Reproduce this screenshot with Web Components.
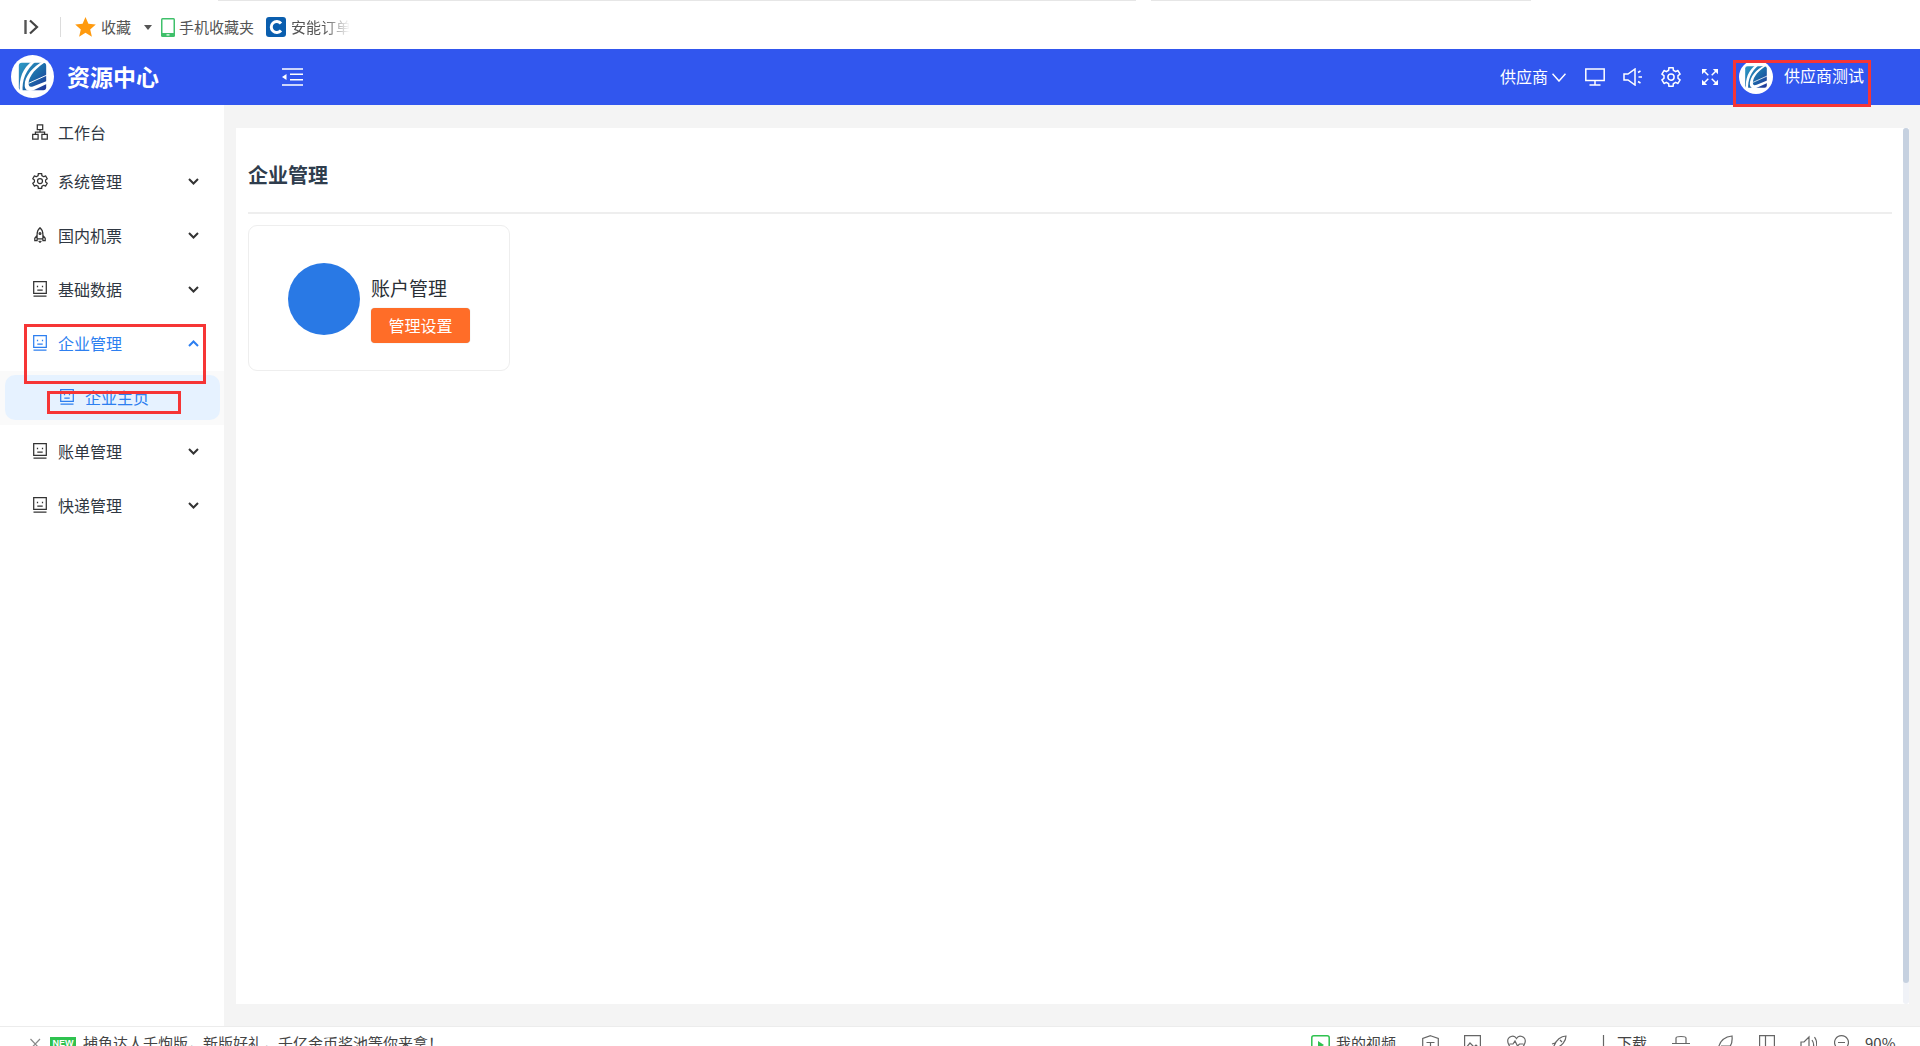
<!DOCTYPE html>
<html lang="zh-CN">
<head>
<meta charset="utf-8">
<title>资源中心</title>
<style>
html,body{margin:0;height:100%;overflow:hidden;background:#fff}
body{font-family:"Noto Sans CJK SC","Liberation Sans",sans-serif;display:flex;flex-direction:column;height:1046px;position:relative}
</style>
</head>
<body>
<browser-bar></browser-bar>
<app-header></app-header>
<app-shell>
  <side-menu slot="side">
    <menu-item icon="org" label="工作台" plain></menu-item>
    <menu-item icon="gear" label="系统管理"></menu-item>
    <menu-item icon="rocket" label="国内机票"></menu-item>
    <menu-item icon="face" label="基础数据"></menu-item>
    <menu-item icon="face" label="企业管理" open></menu-item>
    <sub-item icon="face" label="企业主页"></sub-item>
    <menu-item icon="face" label="账单管理"></menu-item>
    <menu-item icon="face" label="快递管理"></menu-item>
  </side-menu>
  <content-panel heading="企业管理">
    <account-card title-text="账户管理" action="管理设置"></account-card>
  </content-panel>
</app-shell>
<status-bar></status-bar>
<red-mark style="left:24px;top:324px;width:182px;height:60px"></red-mark>
<red-mark style="left:47px;top:391px;width:134px;height:23px"></red-mark>
<red-mark style="left:1733px;top:60px;width:138px;height:47px"></red-mark>
<script>
const FONT='"Noto Sans CJK SC","Liberation Sans",sans-serif';
/* six-lobed gear outline, centred on (8,8) */
function gearPath(R,r){
  let d='';
  for(let i=0;i<6;i++){
    const a=-90+i*60;
    const pts=[[r,a-19],[R,a-13],[R,a+13],[r,a+19]];
    pts.forEach(([q,t],k)=>{
      const x=(8+q*Math.cos(t*Math.PI/180)).toFixed(2),y=(8+q*Math.sin(t*Math.PI/180)).toFixed(2);
      d+=(i===0&&k===0?'M':'L')+x+' '+y;
    });
  }
  return d+'z';
}
const ICONS={
 org:'<path d="M5.300.8h5.400v4.900H5.300zM.7 10.300h5.400v4.900H.7zM9.900 10.300h5.400v4.900H9.900zM8 5.700V8M3.400 10.300V8h9.200v2.300"/>',
 gear:`<path stroke-linejoin="round" d="${gearPath(7.6,5.7)}"/><circle cx="8" cy="8" r="2.500"/>`,
 rocket:'<path d="M8 .8c2 1.700 2.900 4 2.900 6.500v4.500H5.100V7.300C5.100 4.800 6 2.500 8 .8zM5.100 8.300 2.800 11.300v2.200h2.300v-1.700M10.900 8.300l2.300 3v2.200h-2.300v-1.700M6.700 13.800 8 15.300l1.300-1.500"/><circle cx="8" cy="6.500" r=".9"/>',
 face:'<path d="M1.700.7h12.600v11.600H1.700zM1.500 15h13"/><path d="M5.500 4.700v1.500M10.500 4.700v1.500M5.300 9h5.400"/>'
};
function def(name,html,init){
  customElements.define(name,class extends HTMLElement{
    constructor(){super();this.attachShadow({mode:'open'});}
    connectedCallback(){
      this.shadowRoot.innerHTML=typeof html==='function'?html(this):html;
      if(init)init(this);
    }
  });
}
const LOGO=(s)=>`<svg width="${s}" height="${s}" viewBox="0 0 44 44" style="display:block;flex:none">
<defs><linearGradient id="lg" x1="0" y1="0" x2="1" y2="1"><stop offset="0" stop-color="#2f9bc6"/><stop offset=".55" stop-color="#1c6aa8"/><stop offset="1" stop-color="#20329a"/></linearGradient></defs>
<circle cx="22" cy="22" r="22" fill="#fff"/>
<path d="M11 8h22q3 0 3 3v22q0 3-3 3H11q-3 0-3-3V11q0-3 3-3z" fill="url(#lg)"/>
<path d="M22 6C12 14 8 23 9 38h3C11 26 15 15 26 6z" fill="#fff"/>
<path d="M34 6C22 12 14 22 14 31c0 5 4 7 9 5l15-7v-3l-15 6c-4 1.500-5 0-5-3 0-7 8-17 20-23z" fill="#fff"/>
<path d="M38 20 18 29" stroke="#fff" stroke-width="1"/>
</svg>`;

def('browser-bar',`<style>
:host{display:flex;align-items:center;height:49px;flex:none;box-sizing:border-box;background:#fff;position:relative;padding:5px 0 0 24px;font:15px/20px ${FONT};color:#555;overflow:hidden}
.tab{position:absolute;top:0;height:1px;background:#e6e6e6}
.sep{width:1px;height:20px;background:#dcdcdc;margin:0 14px 0 21px}
svg{display:block;flex:none}
.fade{width:59px;white-space:nowrap;overflow:hidden;-webkit-mask-image:linear-gradient(90deg,#000 55%,transparent);mask-image:linear-gradient(90deg,#000 55%,transparent)}
</style>
<span class="tab" style="left:218px;width:918px"></span><span class="tab" style="left:1151px;width:380px"></span>
<svg width="15" height="16" viewBox="0 0 15 16"><path d="M1.500 1v14" stroke="#555" stroke-width="2.400"/><path d="M6 1.500 13 8l-7 6.500" fill="none" stroke="#444" stroke-width="2.200"/></svg>
<span class="sep"></span>
<svg width="21" height="20" viewBox="0 0 21 20"><path d="M10.500 0 13.400 6.800 20.800 7.500 15.200 12.400 16.900 19.700 10.500 15.800 4.100 19.700 5.800 12.400.2 7.500 7.600 6.800z" fill="#ff9a0e"/></svg>
<span style="margin-left:5px">收藏</span>
<svg style="margin-left:13px" width="8" height="5" viewBox="0 0 8 5"><path d="M0 0h8L4 5z" fill="#555"/></svg>
<svg style="margin-left:9px" width="14" height="19" viewBox="0 0 14 19"><rect width="14" height="19" rx="1.500" fill="#3fc06a"/><rect x="1.500" y="1.500" width="11" height="13.500" fill="#fff"/><rect x="5.500" y="16.300" width="3" height="1.200" fill="#fff"/></svg>
<span style="margin-left:4px">手机收藏夹</span>
<svg style="margin-left:12px" width="20" height="20" viewBox="0 0 20 20"><rect width="20" height="20" rx="3" fill="#0a5eae"/><path d="M15 6.500A5.500 5.500 0 1 0 15 13.500" fill="none" stroke="#fff" stroke-width="3"/></svg>
<span class="fade" style="margin-left:5px">安能订单</span>`);

const corner=(t)=>`<g transform="${t}"><path d="M0 0h5.200L0 5.200z" fill="#fff"/><path d="M2 2l4.300 4.300" stroke="#fff" stroke-width="1.500"/></g>`;
def('app-header',()=>`<style>
:host{display:flex;align-items:center;height:56px;flex:none;background:#3156ee;color:#fff;font:16px/24px ${FONT}}
.brand{display:flex;align-items:center;width:282px;padding:0 0 2px 11px;box-sizing:border-box;flex:none;gap:13px}
.brand b{font-size:23px;font-weight:700}
.right{margin-left:auto;display:flex;align-items:center;padding-right:56px}
.sup{position:relative;top:-1px}
svg{display:block;flex:none}
.st{fill:none;stroke:#fff;stroke-width:1.500}
.user{margin-left:11px;position:relative;top:-2px}
</style>
<div class="brand">${LOGO(43)}<b>资源中心</b></div>
<svg width="21" height="18" viewBox="0 0 21 18"><path d="M0 1h21M8 6.300h13M8 11.700h13M0 17h21" stroke="#fff" stroke-width="1.600"/><path d="M0 9l4.500-3v6z" fill="#fff"/></svg>
<div class="right">
 <span class="sup">供应商</span>
 <svg style="margin-left:4px" width="14" height="9" viewBox="0 0 14 9"><path class="st" d="M.5.700 7 8 13.500.700"/></svg>
 <svg style="margin-left:19px" width="20" height="18" viewBox="0 0 20 18"><path class="st" d="M.8 1h18.400v11.500H.8zM10 12.500V17M4.500 17h11"/></svg>
 <svg style="margin-left:18px" width="20" height="18" viewBox="0 0 20 18"><path class="st" d="M1 6h4l7-5v16l-7-5H1z"/><path class="st" d="M15 4.500l2.500-1.500M15.500 9H19M15 13.500l2.500 1.500"/></svg>
 <svg style="margin-left:18px" width="20" height="20" viewBox="0 0 16 16"><g fill="none" stroke="#fff" stroke-width="1.200">${ICONS.gear}</g></svg>
 <svg style="margin-left:21px" width="16" height="16" viewBox="0 0 16 16">${corner('')}${corner('translate(16 0) scale(-1 1)')}${corner('translate(0 16) scale(1 -1)')}${corner('translate(16 16) scale(-1 -1)')}</svg>
 <span style="margin-left:21px">${LOGO(34)}</span>
 <span class="user">供应商测试</span>
</div>`);

def('app-shell',`<style>
:host{display:flex;flex:1;min-height:0;background:#f4f4f4}
::slotted([slot=side]){flex:none}
.main{flex:1;min-width:0;padding:23px 11px 22px 12px;display:flex}
</style>
<slot name="side"></slot><div class="main"><slot></slot></div>`);

def('side-menu',`<style>
:host{display:block;width:224px;background:#fff;box-sizing:border-box}
</style><slot></slot>`);

const chev=(c,up)=>`<svg width="11" height="7" viewBox="0 0 11 7" style="margin-left:auto;display:block;flex:none"><path d="${up?'M1 6 5.500 1.500 10 6':'M1 1 5.500 5.500 10 1'}" fill="none" stroke="${c}" stroke-width="2"/></svg>`;
const ic=(n,c)=>`<svg width="16" height="16" viewBox="0 0 16 16" style="display:block;flex:none"><g fill="none" stroke="${c}" stroke-width="1.250">${ICONS[n]}</g></svg>`;

def('menu-item',(e)=>{
 const open=e.hasAttribute('open'),plain=e.hasAttribute('plain');
 const c=open?'#2d7ff0':'#2f3742';
 return `<style>
 :host{display:flex;align-items:center;box-sizing:border-box;height:${plain?50:54}px;padding:${plain?'4px':'0'} 25px ${plain?'0':'2px'} 32px;color:${c};font:16px/22px ${FONT}}
 .t{margin-left:10px;white-space:nowrap}
 </style>${ic(e.getAttribute('icon'),open?'#2d7ff0':'#333')}<span class="t">${e.getAttribute('label')}</span>${plain?'':chev(open?'#2d7ff0':'#333',open)}`;
});

def('sub-item',(e)=>`<style>
:host{display:block;height:54px;background:#fafafa;box-sizing:border-box;padding:4px 4px 5px 5px}
.pill{display:flex;align-items:center;box-sizing:border-box;height:100%;background:#e6f2ff;border-radius:10px;padding:0 0 1px 54px;color:#2d7ff0;font:16px/22px ${FONT}}
.t{margin-left:10px}
</style><div class="pill">${ic(e.getAttribute('icon'),'#2d7ff0')}<span class="t">${e.getAttribute('label')}</span></div>`);

def('content-panel',(e)=>`<style>
:host{display:block;flex:1;background:#fff;position:relative;box-sizing:border-box;padding:0 17px 0 12px;min-width:0}
h2{margin:0;height:86px;box-sizing:border-box;padding-top:33px;font:700 20px/28px ${FONT};color:#2f3d4d;border-bottom:2px solid #eee;margin-bottom:11px}
.track{position:absolute;right:0;top:0;bottom:0;width:6px;background:#f0f2f7;border-radius:3px}
.thumb{position:absolute;left:0;right:0;top:0;bottom:21px;background:#c6d1e0;border-radius:3px}
</style><h2>${e.getAttribute('heading')}</h2><slot></slot><div class="track"><div class="thumb"></div></div>`);

def('account-card',(e)=>`<style>
:host{display:flex;align-items:center;box-sizing:border-box;width:262px;height:146px;border:1px solid #eee;border-radius:9px;padding:0 0 0 39px;background:#fff}
.dot{width:72px;height:72px;border-radius:50%;background:#2979e5;flex:none;margin-top:2px}
.col{margin-left:11px;padding-top:21px}
.tt{font:19px/25px ${FONT};color:#2a2f36;margin-bottom:8px}
.btn{width:99px;height:35px;border-radius:4px;background:#ff6d28;color:#fff;font:16px/35px ${FONT};text-align:center;box-shadow:0 0 1px rgba(0,0,0,.3)}
</style><div class="dot"></div><div class="col"><div class="tt">${e.getAttribute('title-text')}</div><div class="btn">${e.getAttribute('action')}</div></div>`);

const g=(w,ml,d)=>`<svg width="${w}" height="20" viewBox="0 0 ${w} 20" style="display:block;flex:none;margin:3px 0 0 ${ml}px"><path d="${d}" fill="none" stroke="#666" stroke-width="1.200"/></svg>`;
def('status-bar',`<style>
:host{display:flex;align-items:flex-start;height:20px;flex:none;box-sizing:border-box;border-top:1px solid #ececec;background:#fff;padding:5px 0 0 30px;overflow:hidden;font:15px/22px ${FONT};color:#444;white-space:nowrap}
.new{width:26px;height:18px;background:#2fc24f;color:#fff;font:700 9px/13px "Liberation Sans",sans-serif;text-align:center;margin:5px 7px 0 9px;flex:none}
.r{margin-left:auto;display:flex;align-items:flex-start;width:609px;box-sizing:border-box}
</style>
<svg width="11" height="12" viewBox="0 0 11 12" style="display:block;flex:none;margin-top:6px"><path d="M.5 1 10 11M10 1 .5 11" stroke="#888" stroke-width="1.200" fill="none"/></svg>
<span class="new">NEW</span><span>捕鱼达人千炮版，新版好礼，千亿金币奖池等你来拿！</span>
<div class="r">
 <svg width="19" height="20" viewBox="0 0 19 20" style="display:block;flex:none;margin-top:3px"><rect x=".8" y=".8" width="17.400" height="18.400" rx="2" fill="none" stroke="#2fc24f" stroke-width="1.500"/><path d="M7 6l6 4-6 4z" fill="#2fc24f"/></svg>
 <span style="margin-left:6px">我的视频</span>
 ${g(17,26,'M8.500.7 16.300 3.500V11c0 3-3 6-7.800 8C3.700 17 .7 14 .7 11V3.500zM4.500 7.500h8M8.500 7.500v6')}
 ${g(17,25,'M.6.6h15.800v18H.6zM1 14l5-6 4 4 2-2 4 4')}
 ${g(19,26,'M9.500 18C3 13 .7 10 .7 6c0-4 6-7 8.800-2.500C12.300-1 18.300 2 18.300 6c0 4-2.300 7-8.800 12zM2.500 9h3.500l2-3 2.500 5 2-2h4')}
 ${g(16,25,'M15 1C10 1 5 5 3 11l2 2c6-2 10-7 10-12zM1 9l3-1M8 15l1-3M9 5l2 2')}
 ${g(15,29,'M7.500 0v18M.7 11.500 7.500 18l6.800-6.500')}
 <span style="margin-left:6px">下载</span>
 ${g(18,25,'M4 8V3C4 1 14 1 14 3v5M0 8.500h18M2 11.500h14M4 15h10')}
 ${g(16,27,'M1 18C1 8 6 2 15 1c1 9-3 14-10 14M4 11h9')}
 ${g(16,26,'M.6.6h14.800v18H.6zM6.500.6v18')}
 ${g(17,25,'M1 7h3l5-5v15l-5-4H1zM12 5c2 3 2 7 0 10M14.500 2c3 4 3 12 0 16')}
 ${g(15,17,'M7.500.6a6.900 6.900 0 1 0 .01 0zM4 7.500h7')}
 <span style="margin-left:16px">90%</span>
</div>`);

def('red-mark',`<style>:host{position:absolute;display:block;box-sizing:border-box;border:3px solid #f63535;pointer-events:none}</style>`);
</script>
</body>
</html>
